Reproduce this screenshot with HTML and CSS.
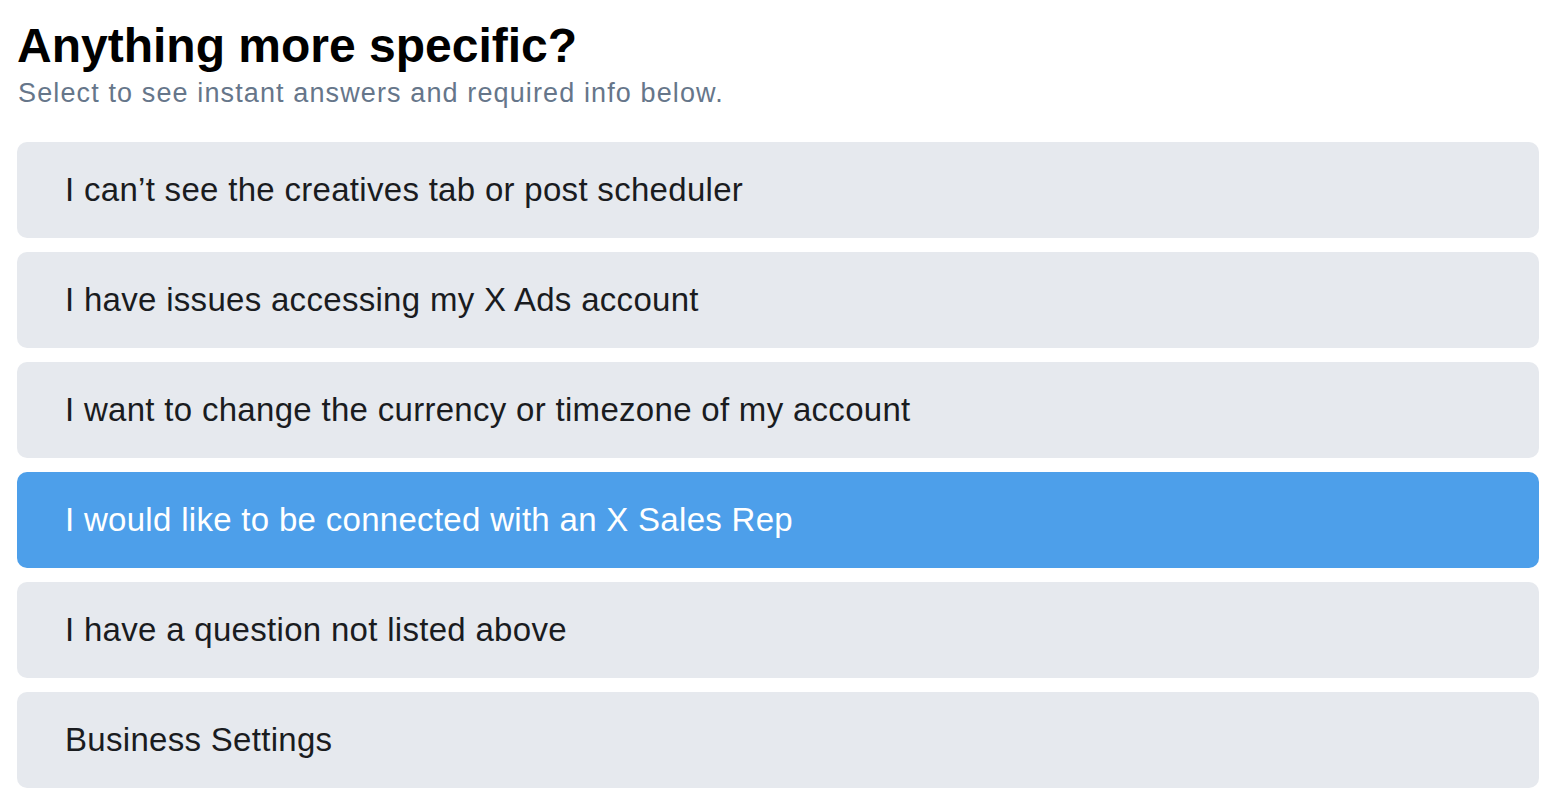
FILE: index.html
```html
<!DOCTYPE html>
<html>
<head>
<meta charset="utf-8">
<link rel="stylesheet" href="styles.css">
</head>
<body>
<div class="page">
  <h1 class="title">Anything more specific?</h1>
  <p class="subtitle">Select to see instant answers and required info below.</p>
  <div class="options">
    <button class="option">I can’t see the creatives tab or post scheduler</button>
    <button class="option">I have issues accessing my X Ads account</button>
    <button class="option">I want to change the currency or timezone of my account</button>
    <button class="option selected">I would like to be connected with an X Sales Rep</button>
    <button class="option">I have a question not listed above</button>
    <button class="option">Business Settings</button>
  </div>
</div>
</body>
</html>
```

FILE: styles.css
```css
html, body {
  margin: 0;
  padding: 0;
  background: #ffffff;
}
.page {
  padding: 18px 25px 0 17px;
  font-family: "Liberation Sans", Arial, sans-serif;
}
.title {
  margin: 0;
  font-size: 48px;
  font-weight: 700;
  line-height: 56px;
  color: #000000;
}
.subtitle {
  margin: 3px 0 0 0;
  font-size: 27px;
  line-height: 32px;
  letter-spacing: 1.12px;
  color: #66768a;
  padding-left: 1px;
}
.options {
  margin-top: 33px;
  display: flex;
  flex-direction: column;
  gap: 14px;
}
.option {
  display: block;
  width: 100%;
  height: 96px;
  border: none;
  border-radius: 10px;
  background: #e6e9ee;
  color: #1a1c1f;
  font-family: "Liberation Sans", Arial, sans-serif;
  font-size: 33px;
  text-align: left;
  padding: 0 0 0 48px;
  letter-spacing: 0.3px;
}
.option.selected {
  background: #4d9fea;
  color: #ffffff;
}
```
